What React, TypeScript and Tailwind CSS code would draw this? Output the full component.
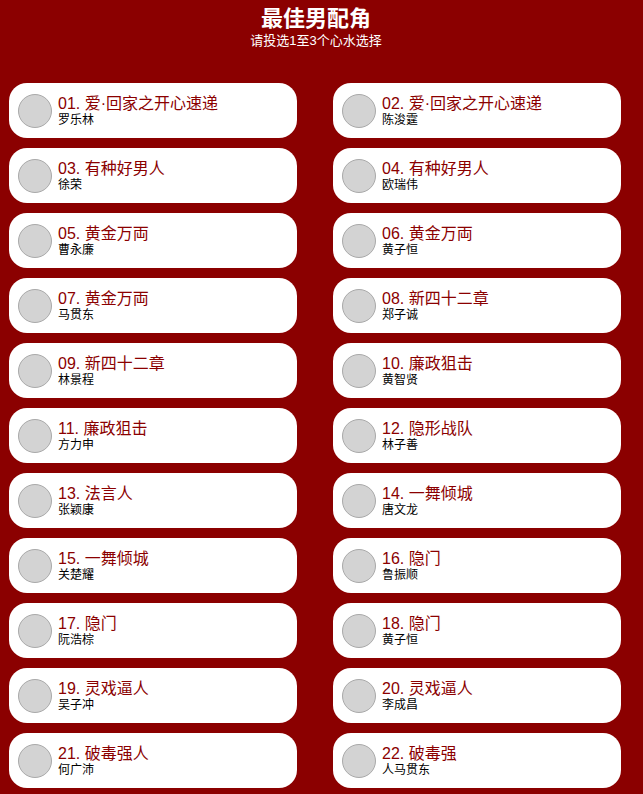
import React from 'react';

interface Nominee {
  no: string;
  work: string;
  name: string;
}

const nominees: Nominee[] = [
  { no: '01', work: '爱·回家之开心速递', name: '罗乐林' },
  { no: '02', work: '爱·回家之开心速递', name: '陈浚霆' },
  { no: '03', work: '有种好男人', name: '徐荣' },
  { no: '04', work: '有种好男人', name: '欧瑞伟' },
  { no: '05', work: '黄金万両', name: '曹永廉' },
  { no: '06', work: '黄金万両', name: '黄子恒' },
  { no: '07', work: '黄金万両', name: '马贯东' },
  { no: '08', work: '新四十二章', name: '郑子诚' },
  { no: '09', work: '新四十二章', name: '林景程' },
  { no: '10', work: '廉政狙击', name: '黄智贤' },
  { no: '11', work: '廉政狙击', name: '方力申' },
  { no: '12', work: '隐形战队', name: '林子善' },
  { no: '13', work: '法言人', name: '张颖康' },
  { no: '14', work: '一舞倾城', name: '唐文龙' },
  { no: '15', work: '一舞倾城', name: '关楚耀' },
  { no: '16', work: '隐门', name: '鲁振顺' },
  { no: '17', work: '隐门', name: '阮浩棕' },
  { no: '18', work: '隐门', name: '黄子恒' },
  { no: '19', work: '灵戏逼人', name: '吴子冲' },
  { no: '20', work: '灵戏逼人', name: '李成昌' },
  { no: '21', work: '破毒强人', name: '何广沛' },
  { no: '22', work: '破毒强', name: '人马贯东' },
];

const NomineeCard: React.FC<{ item: Nominee }> = ({ item }) => (
  <div className="h-[55px] rounded-[18px] bg-white flex items-center pl-[9px] gap-[6px] cursor-pointer">
    <div className="w-[34px] h-[34px] shrink-0 rounded-full bg-[#d3d3d3] border border-[#a9a9a9]" />
    <div className="flex flex-col">
      <span className="text-[16px] leading-[18px] text-[#8b0000]">
        {item.no}. {item.work}
      </span>
      <span className="text-[12px] leading-[14px] text-black">{item.name}</span>
    </div>
  </div>
);

export default function App() {
  return (
    <div
      className="min-h-screen bg-[#8b0000] pb-4"
      style={{ fontFamily: '"Liberation Sans", "Noto Sans CJK SC", sans-serif' }}
    >
      <div className="w-[632px] pt-[5px] text-center text-white">
        <h1 className="text-[22px] leading-[28px] font-bold">最佳男配角</h1>
        <p className="text-[13px] leading-[16px]">请投选1至3个心水选择</p>
      </div>
      <div className="grid grid-cols-[288px_288px] gap-x-[36px] gap-y-[10px] pl-[9px] pt-[34px]">
        {nominees.map((n) => (
          <NomineeCard key={n.no} item={n} />
        ))}
      </div>
    </div>
  );
}
